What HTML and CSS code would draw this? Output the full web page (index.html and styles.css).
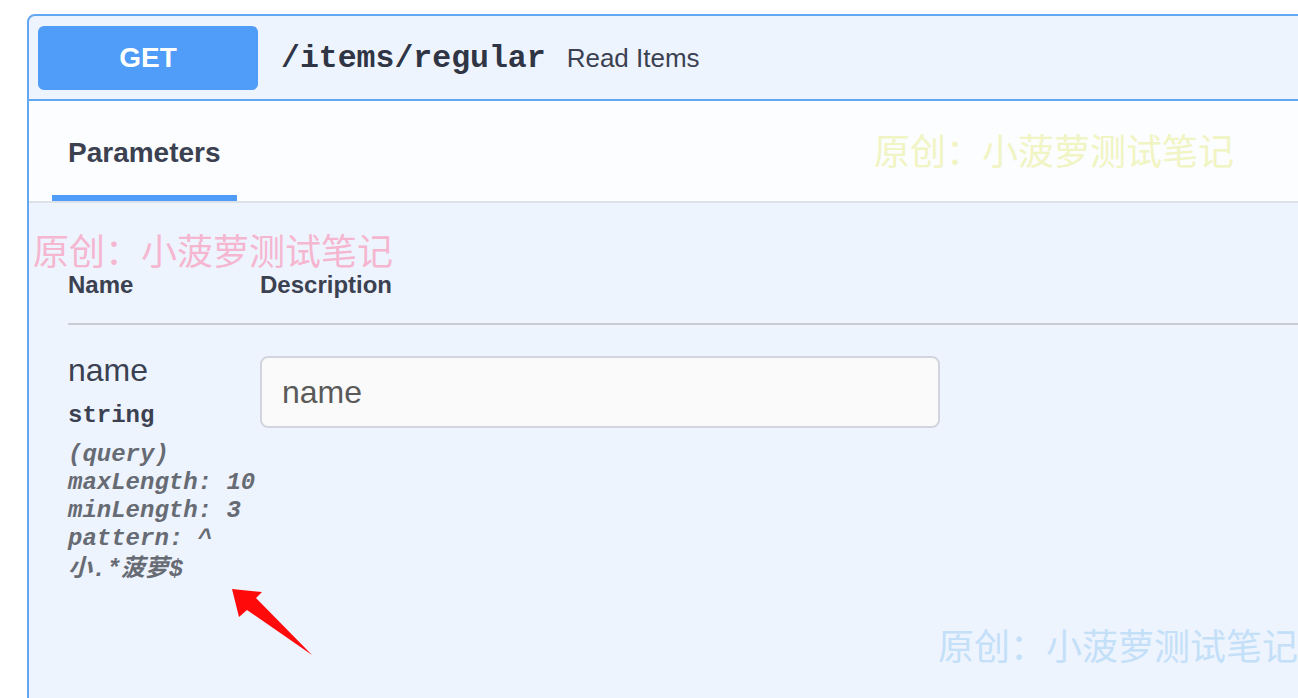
FILE: index.html
```html
<!DOCTYPE html>
<html lang="zh-CN">
<head>
<meta charset="utf-8">
<title>Swagger - Read Items</title>
<link rel="stylesheet" href="styles.css">
</head>
<body>
<div class="page">
  <div class="opblock">
    <div class="summary">
      <span class="method">GET</span>
      <span class="path">/items/regular</span>
      <span class="summary-desc">Read Items</span>
    </div>
    <div class="tabs">
      <div class="tab">Parameters</div>
    </div>
    <div class="params">
      <div class="thead">
        <div class="col-name">Name</div>
        <div class="col-desc">Description</div>
      </div>
      <div class="prow">
        <div class="col-name">
          <div class="pname">name</div>
          <div class="ptype">string</div>
          <div class="pprops">
            <div>(query)</div>
            <div>maxLength: 10</div>
            <div>minLength: 3</div>
            <div>pattern: ^</div>
            <div class="cjk-line">小.*菠萝$</div>
          </div>
        </div>
        <div class="col-desc">
          <input class="pinput" type="text" placeholder="name">
        </div>
      </div>
    </div>
  </div>

  <div class="wm wm-pink">原创：小菠萝测试笔记</div>
  <div class="wm wm-yellow">原创：小菠萝测试笔记</div>
  <div class="wm wm-blue">原创：小菠萝测试笔记</div>

  <svg class="arrow" width="1298" height="698" viewBox="0 0 1298 698">
    <polygon points="232,589 262,592 256,598 312,655 247,610 239,617" fill="#ff0a0a"/>
  </svg>
</div>
</body>
</html>
```

FILE: styles.css
```css
html, body {
  margin: 0;
  padding: 0;
  background: #ffffff;
  overflow: hidden;
}

.page {
  position: relative;
  width: 1298px;
  height: 698px;
  overflow: hidden;
  font-family: "Liberation Sans", Arial, sans-serif;
  color: #3b4151;
}

.opblock {
  margin: 14px 0 0 27px;
  width: 1320px;
  height: 720px;
  border: 2px solid #62a7f2;
  border-radius: 8px;
  background: #eef4fe;
  overflow: hidden;
}

.summary {
  display: flex;
  align-items: center;
  padding: 10px 9px 9px;
  border-bottom: 2px solid #62a7f2;
}

.method {
  width: 220px;
  height: 64px;
  border-radius: 6px;
  background: #4f9cf9;
  color: #ffffff;
  font-weight: bold;
  font-size: 28px;
  display: flex;
  align-items: center;
  justify-content: center;
}

.path {
  margin-left: 23px;
  font-family: "Liberation Mono", "Courier New", monospace;
  font-weight: bold;
  font-size: 31.5px;
  color: #2f3544;
}

.summary-desc {
  margin-left: 21px;
  font-size: 26px;
  color: #3b4151;
}

.tabs {
  height: 100px;
  display: flex;
  align-items: flex-end;
  padding-left: 23px;
  background: #fcfdff;
  border-bottom: 2px solid #dde2e9;
}

.tab {
  padding: 0 16px 26px;
  font-size: 28px;
  line-height: 32px;
  font-weight: bold;
  color: #3b4151;
  border-bottom: 6px solid #4f9cf9;
}

.params {
  padding-left: 39px;
}

.thead {
  display: flex;
  margin-top: 70px;
  padding-bottom: 26px;
  border-bottom: 2px solid #c9cdd4;
  font-size: 24px;
  line-height: 24px;
  font-weight: bold;
}

.col-name {
  width: 192px;
  flex: none;
}

.prow {
  display: flex;
  padding-top: 27px;
}

.pname {
  font-size: 32px;
  line-height: 36px;
  color: #3b4151;
}

.ptype {
  margin-top: 14px;
  font-family: "Liberation Mono", "Courier New", monospace;
  font-weight: bold;
  font-size: 24px;
  line-height: 28px;
  color: #3b4151;
}

.pprops {
  margin-top: 11px;
  font-family: "Liberation Mono", "Courier New", "Noto Sans CJK SC", monospace;
  font-weight: bold;
  font-style: italic;
  font-size: 24px;
  line-height: 28px;
  color: #676b73;
}

.cjk-line {
  margin-top: 3px;
}

.pinput {
  display: block;
  box-sizing: border-box;
  margin: 4px 0 0;
  width: 680px;
  height: 72px;
  padding: 0 20px;
  border: 2px solid #d3d5dc;
  border-radius: 8px;
  background: #fafafa;
  font-family: "Liberation Sans", Arial, sans-serif;
  font-size: 32px;
  color: #3b4151;
  outline: none;
}

.pinput::placeholder {
  color: #5a5a5a;
  opacity: 1;
}

.wm {
  position: absolute;
  font-family: "Noto Sans CJK SC", sans-serif;
  font-size: 36px;
  line-height: 30px;
  white-space: nowrap;
  pointer-events: none;
}

.wm-pink {
  left: 33px;
  top: 234px;
  color: #f5b6d0;
}

.wm-yellow {
  left: 874px;
  top: 134px;
  color: #f1f4c3;
}

.wm-blue {
  left: 938px;
  top: 629px;
  color: #c3e0f8;
}

.arrow {
  position: absolute;
  left: 0;
  top: 0;
  pointer-events: none;
}
```
